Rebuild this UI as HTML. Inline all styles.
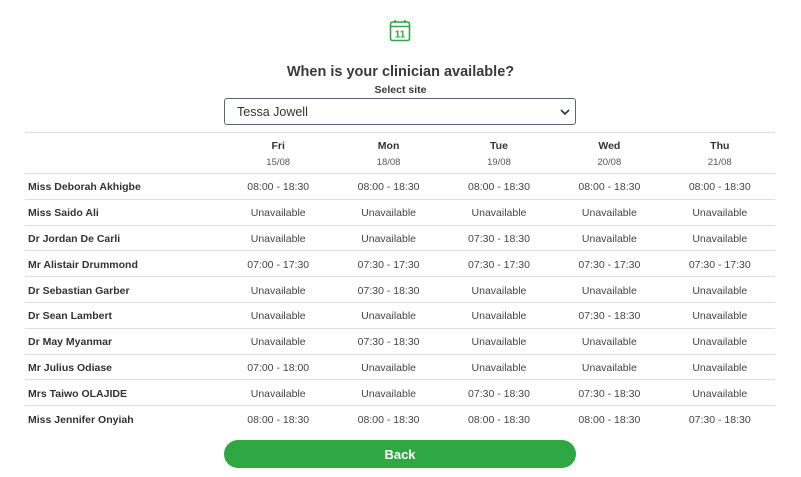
<!DOCTYPE html>
<html><head><meta charset="utf-8"><style>
*{margin:0;padding:0;box-sizing:border-box}
body{width:801px;height:477px;background:#fff;font-family:"Liberation Sans",sans-serif;color:#444;position:relative;overflow:hidden}
.ab{position:absolute}
h1{position:absolute;top:64px;left:0;width:801px;text-align:center;font-size:14.5px;font-weight:bold;color:#3a3a3a}
.ss{top:84px;left:0;width:801px;text-align:center;font-size:10.5px;font-weight:bold;color:#3a3a3a}
.sel{left:224px;top:98px;width:352px;height:27px;border:1px solid #5a6480;border-radius:3px;font-size:12.5px;color:#333;padding:6px 12px}
table{position:absolute;left:25px;top:132px;width:750px;border-collapse:collapse;font-size:10.5px}
td,th{border-top:1px solid #ddd;height:25.8px;text-align:center;font-weight:normal;color:#444;padding-top:2px}
td.n{text-align:left;font-weight:bold;width:198px;color:#333;padding-left:3px}
tr.h td{height:41px;vertical-align:middle}
tr.h b{display:block;font-size:10.5px;color:#333;margin-bottom:4px}
tr.h span{font-size:9.5px;color:#555}
.btn{left:224px;top:440px;width:352px;height:28px;background:#2fa843;border-radius:14px;color:#fff;font-weight:bold;font-size:13px;text-align:center;line-height:29px}
</style></head><body>
<svg class="ab" style="left:389px;top:19px" width="22" height="23" viewBox="0 0 22 23">
<rect x="1.5" y="3" width="19" height="18.5" rx="2" fill="none" stroke="#2fa843" stroke-width="1.6"/>
<line x1="1.5" y1="7.5" x2="20.5" y2="7.5" stroke="#2fa843" stroke-width="1.6"/>
<line x1="6" y1="1" x2="6" y2="4" stroke="#2fa843" stroke-width="1.6"/>
<line x1="16" y1="1" x2="16" y2="4" stroke="#2fa843" stroke-width="1.6"/>
<text x="11" y="18.5" text-anchor="middle" font-family="Liberation Sans" font-weight="bold" font-size="10" fill="#2fa843">11</text>
</svg>
<h1>When is your clinician available?</h1>
<div class="ab ss">Select site</div>
<div class="ab sel">Tessa Jowell
<svg class="ab" style="right:5px;top:9px" width="10" height="8" viewBox="0 0 10 8"><path d="M1 2l4 4 4-4" fill="none" stroke="#333" stroke-width="1.6"/></svg></div>
<table>
<tr class="h"><td class="n"></td><td><b>Fri</b><span>15/08</span></td><td><b>Mon</b><span>18/08</span></td><td><b>Tue</b><span>19/08</span></td><td><b>Wed</b><span>20/08</span></td><td><b>Thu</b><span>21/08</span></td></tr>
<tr><td class="n">Miss Deborah Akhigbe</td><td>08:00 - 18:30</td><td>08:00 - 18:30</td><td>08:00 - 18:30</td><td>08:00 - 18:30</td><td>08:00 - 18:30</td></tr>
<tr><td class="n">Miss Saido Ali</td><td>Unavailable</td><td>Unavailable</td><td>Unavailable</td><td>Unavailable</td><td>Unavailable</td></tr>
<tr><td class="n">Dr Jordan De Carli</td><td>Unavailable</td><td>Unavailable</td><td>07:30 - 18:30</td><td>Unavailable</td><td>Unavailable</td></tr>
<tr><td class="n">Mr Alistair Drummond</td><td>07:00 - 17:30</td><td>07:30 - 17:30</td><td>07:30 - 17:30</td><td>07:30 - 17:30</td><td>07:30 - 17:30</td></tr>
<tr><td class="n">Dr Sebastian Garber</td><td>Unavailable</td><td>07:30 - 18:30</td><td>Unavailable</td><td>Unavailable</td><td>Unavailable</td></tr>
<tr><td class="n">Dr Sean Lambert</td><td>Unavailable</td><td>Unavailable</td><td>Unavailable</td><td>07:30 - 18:30</td><td>Unavailable</td></tr>
<tr><td class="n">Dr May Myanmar</td><td>Unavailable</td><td>07:30 - 18:30</td><td>Unavailable</td><td>Unavailable</td><td>Unavailable</td></tr>
<tr><td class="n">Mr Julius Odiase</td><td>07:00 - 18:00</td><td>Unavailable</td><td>Unavailable</td><td>Unavailable</td><td>Unavailable</td></tr>
<tr><td class="n">Mrs Taiwo OLAJIDE</td><td>Unavailable</td><td>Unavailable</td><td>07:30 - 18:30</td><td>07:30 - 18:30</td><td>Unavailable</td></tr>
<tr><td class="n">Miss Jennifer Onyiah</td><td>08:00 - 18:30</td><td>08:00 - 18:30</td><td>08:00 - 18:30</td><td>08:00 - 18:30</td><td>07:30 - 18:30</td></tr>
</table>
<div class="ab btn">Back</div>
</body></html>
